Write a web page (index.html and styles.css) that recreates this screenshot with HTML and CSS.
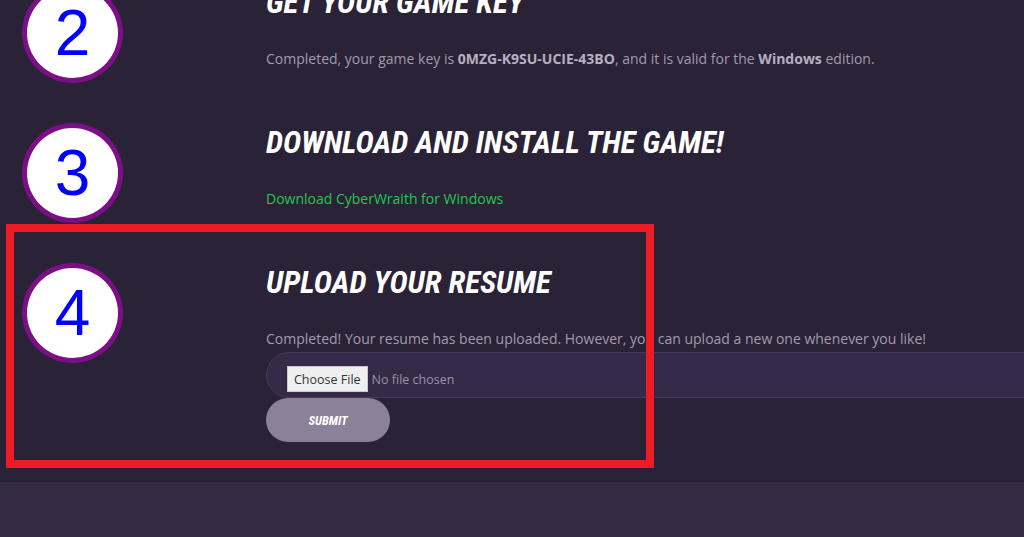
FILE: index.html
```html
<!DOCTYPE html>
<html lang="en">
<head>
<meta charset="utf-8">
<title>CyberWraith – Steps</title>
<link rel="stylesheet" href="styles.css">
</head>
<body>
<main class="steps">
  <section class="step step-first">
    <div class="badge">2</div>
    <div class="step-body">
      <h2 class="step-title">GET YOUR GAME KEY</h2>
      <p class="step-text">Completed, your game key is <b>0MZG-K9SU-UCIE-43BO</b>, and it is valid for the <b>Windows</b> edition.</p>
    </div>
  </section>
  <section class="step">
    <div class="badge">3</div>
    <div class="step-body">
      <h2 class="step-title">DOWNLOAD AND INSTALL THE GAME!</h2>
      <p class="step-text"><a class="download-link" href="#">Download CyberWraith for Windows</a></p>
    </div>
  </section>
  <section class="step step-last">
    <div class="badge">4</div>
    <div class="step-body">
      <h2 class="step-title">UPLOAD YOUR RESUME</h2>
      <p class="step-text">Completed! Your resume has been uploaded. However, you can upload a new one whenever you like!</p>
      <form class="upload-form">
        <div class="file-field"><input class="file-input" type="file" name="resume"></div>
        <button class="submit-btn" type="button">SUBMIT</button>
      </form>
    </div>
  </section>
</main>
<div class="annotation"></div>
<footer class="footer"></footer>
</body>
</html>
```
FILE: styles.css
```css
html, body {
  margin: 0;
  padding: 0;
}
body {
  background: #2a2236;
  overflow: hidden;
  font-family: "Open Sans", "Liberation Sans", sans-serif;
  position: relative;
  width: 1024px;
  height: 537px;
}
.steps {
  padding-bottom: 40px;
}
.step {
  display: flex;
  align-items: flex-start;
  gap: 143px;
  padding-left: 22px;
  margin-bottom: 56px;
}
.step-first {
  margin-top: -15px;
}
.step-last {
  margin-bottom: 0;
}
.badge {
  flex: 0 0 auto;
  box-sizing: border-box;
  width: 101px;
  height: 100px;
  margin-top: -2px;
  margin-bottom: -30px;
  border-radius: 50%;
  border: 5px solid #7d0f86;
  background: #ffffff;
  color: #0000ff;
  font-family: "Liberation Sans", Arial, sans-serif;
  font-size: 64px;
  line-height: 90px;
  text-align: center;
}
.step-body {
  flex: 0 0 900px;
}
.step-title {
  margin: 0;
  font-family: Roboto, "Liberation Sans", sans-serif;
  font-weight: 700;
  font-style: italic;
  font-stretch: 75%;
  font-size: 31px;
  line-height: 36px;
  color: #ffffff;
}
.step-text {
  margin: 28px 0 0;
  font-size: 14px;
  line-height: 20px;
  color: #a39bae;
}
.step-text b {
  font-weight: 700;
  color: #b6afc1;
}
.download-link {
  color: #21c94c;
  text-decoration: none;
}
.upload-form {
  margin-top: 3px;
}
.file-field {
  box-sizing: border-box;
  height: 46px;
  padding: 13px 20px 0;
  border: 1px solid #43395a;
  border-radius: 23px;
  background: #352a47;
}
.file-input {
  font-family: "Open Sans", sans-serif;
  font-size: 12.5px;
  color: #9a92a6;
}
.file-input::file-selector-button {
  font-family: "Open Sans", sans-serif;
  font-size: 12.5px;
  color: #333333;
  background: #efefef;
  border: 1px solid #c9c9c9;
  border-radius: 0;
  height: 26px;
  padding: 0 6px;
  margin-right: 4px;
}
.submit-btn {
  display: block;
  width: 124px;
  height: 44px;
  border: 0;
  border-radius: 22px;
  background: #8b8198;
  color: #ffffff;
  font-family: Roboto, sans-serif;
  font-weight: 700;
  font-style: italic;
  font-stretch: 75%;
  font-size: 12.5px;
  padding: 0;
}
.annotation {
  position: absolute;
  left: 6px;
  top: 224px;
  width: 648px;
  height: 244px;
  box-sizing: border-box;
  border: 8px solid #ed1c24;
  pointer-events: none;
}
.footer {
  height: 55px;
  background: #352b45;
}
```
